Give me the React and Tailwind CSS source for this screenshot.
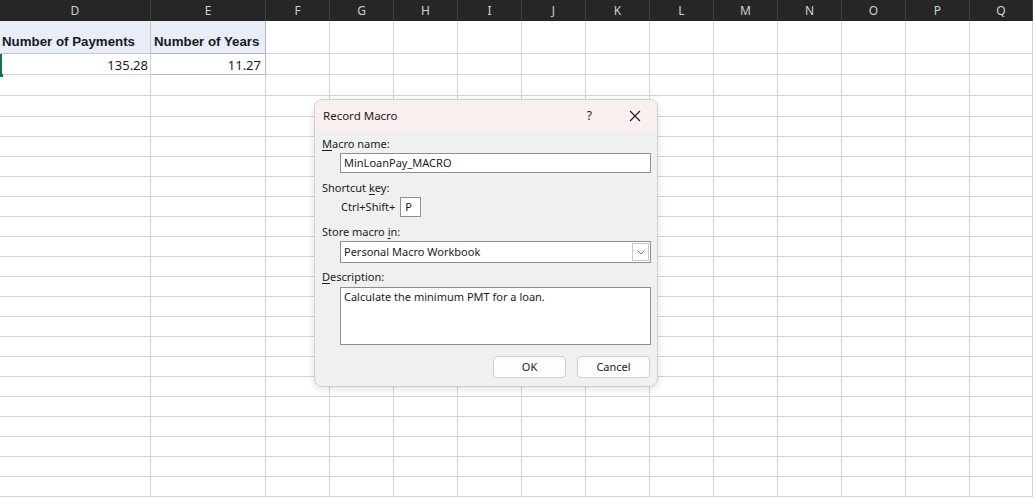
import React from 'react'

const cols = [
  { key: 'D', w: 151 },
  { key: 'E', w: 115 },
  { key: 'F', w: 64 },
  { key: 'G', w: 64 },
  { key: 'H', w: 64 },
  { key: 'I', w: 64 },
  { key: 'J', w: 64 },
  { key: 'K', w: 64 },
  { key: 'L', w: 64 },
  { key: 'M', w: 64 },
  { key: 'N', w: 64 },
  { key: 'O', w: 64 },
  { key: 'P', w: 64 },
  { key: 'Q', w: 63 },
]

// heights of the plain rows below the data (including bottom gridline)
const rowHeights = [21, 21, 20, 20, 20, 20, 20, 20, 20, 20, 20, 20, 20, 20, 20, 20, 20, 20, 20, 20, 20]

const ui = { fontFamily: '"Noto Sans", "Open Sans", sans-serif' }
const cellFont = { fontFamily: '"Liberation Sans", Arial, sans-serif' }

const Label = ({ u, rest, pre = '' }) => (
  <div className="text-[11px] leading-[16px] text-[#1b1b1b] pl-[7px]">
    {pre}
    <span className="underline underline-offset-2">{u}</span>
    {rest}
  </div>
)

const RecordMacroDialog = () => {
  return (
    <div
      className="absolute left-[314px] top-[99px] w-[344px] h-[288px] rounded-[8px] border border-[#cfcfcf] bg-[#f0f0f0] shadow-[0_2px_8px_rgba(0,0,0,0.12)] overflow-hidden flex flex-col"
      style={ui}
    >
      {/* title bar */}
      <div className="h-[31px] shrink-0 bg-[#faefef] flex items-center justify-between pl-[8px] pr-[16px]">
        <span className="text-[11.5px] text-[#1b1b1b]">Record Macro</span>
        <div className="flex items-center gap-[37px]">
          <span className="text-[12px] text-[#1b1b1b]">?</span>
          <svg width="12" height="12" viewBox="0 0 12 12" className="text-[#1b1b1b]">
            <path d="M1 1 L11 11 M11 1 L1 11" stroke="currentColor" strokeWidth="1.1" fill="none" />
          </svg>
        </div>
      </div>

      {/* body */}
      <div className="flex flex-col pt-[5px]">
        <Label u="M" rest="acro name:" />
        <div className="ml-[25px] mt-[1px] w-[311px] h-[20px] bg-white border border-[#8f8f8f] flex items-center pl-[3px] text-[11px] text-[#1b1b1b]">
          MinLoanPay_MACRO
        </div>

        <div className="mt-[7px]">
          <Label pre="Shortcut " u="k" rest="ey:" />
        </div>
        <div className="ml-[26px] mt-[1px] flex items-center">
          <span className="text-[11px] text-[#1b1b1b]">Ctrl+Shift+</span>
          <div className="ml-[5px] w-[21px] h-[20px] bg-white border border-[#8f8f8f] flex items-center pl-[4px] text-[11px] text-[#1b1b1b]">
            P
          </div>
        </div>

        <div className="mt-[7px]">
          <Label pre="Store macro " u="i" rest="n:" />
        </div>
        <div className="ml-[25px] mt-[1px] w-[311px] h-[22px] bg-white border border-[#8f8f8f] flex items-center text-[11px] text-[#1b1b1b]">
          <span className="pl-[3px] flex-1">Personal Macro Workbook</span>
          <div className="w-[17px] h-[18px] mr-[1px] border border-[#c8c8c8] bg-white flex items-center justify-center">
            <svg width="8" height="5" viewBox="0 0 8 5">
              <path d="M0.5 0.5 L4 4 L7.5 0.5" stroke="#707070" strokeWidth="1" fill="none" />
            </svg>
          </div>
        </div>

        <div className="mt-[6px]">
          <Label u="D" rest="escription:" />
        </div>
        <div className="ml-[25px] mt-[2px] w-[311px] h-[58px] bg-white border border-[#8f8f8f] pl-[3px] pt-[1px] text-[11px] leading-[16px] text-[#1b1b1b]">
          Calculate the minimum PMT for a loan.
        </div>

        <div className="mt-[11px] flex justify-end gap-[11px] pr-[7px]">
          <button className="w-[73px] h-[22px] rounded-[4px] border border-[#cfcfcf] bg-[#fdfdfd] text-[11px] text-[#1b1b1b]">
            OK
          </button>
          <button className="w-[73px] h-[22px] rounded-[4px] border border-[#cfcfcf] bg-[#fdfdfd] text-[11px] text-[#1b1b1b]">
            Cancel
          </button>
        </div>
      </div>
    </div>
  )
}

const App = () => {
  return (
    <div className="relative w-[1033px] h-[497px] overflow-hidden bg-white">
      {/* column headers */}
      <div className="flex h-[21px] bg-[#262626]" style={ui}>
        {cols.map((c) => (
          <div
            key={c.key}
            style={{ width: c.w }}
            className="shrink-0 h-full border-r border-[#3d3d3d] flex items-center justify-center text-[12px] text-[#d0d0d0]"
          >
            {c.key}
          </div>
        ))}
      </div>

      {/* row 1: headings */}
      <div className="flex h-[33px]" style={cellFont}>
        {cols.map((c, i) => (
          <div
            key={c.key}
            style={{ width: c.w }}
            className={
              i === 0
                ? 'shrink-0 h-full border-r border-b border-[#c8c8c8] bg-[#e7eef8] flex items-end pb-[1px] pl-[2px] text-[13.3px] font-bold text-[#1a1a1a]'
                : i === 1
                ? 'shrink-0 h-full border-r border-b border-[#b8b8b8] bg-[#e7eef8] flex items-end pb-[1px] pl-[3px] text-[13.3px] font-bold text-[#1a1a1a]'
                : 'shrink-0 h-full border-r border-b border-[#d4d4d4]'
            }
          >
            {i === 0 ? 'Number of Payments' : i === 1 ? 'Number of Years' : ''}
          </div>
        ))}
      </div>

      {/* row 2: values */}
      <div className="relative flex h-[21px]" style={ui}>
        {cols.map((c, i) => (
          <div
            key={c.key}
            style={{ width: c.w }}
            className={
              i === 0
                ? 'shrink-0 h-full border-r border-b border-[#d4d4d4] flex items-end justify-end pr-[2px] text-[13px] leading-[18px] text-[#1a1a1a]'
                : i === 1
                ? 'shrink-0 h-full border-r border-b border-[#b8b8b8] flex items-end justify-end pr-[4px] text-[13px] leading-[18px] text-[#1a1a1a]'
                : 'shrink-0 h-full border-r border-b border-[#d4d4d4]'
            }
          >
            {i === 0 ? '135.28' : i === 1 ? '11.27' : ''}
          </div>
        ))}
        {/* selected cell edge from column C */}
        <div className="absolute left-0 top-0 w-[2px] h-[22px] bg-[#1f6e43]" />
        <div className="absolute left-0 top-[20px] w-[3px] h-[3px] bg-[#1f6e43]" />
      </div>

      {/* empty rows */}
      {rowHeights.map((h, r) => (
        <div key={r} className="flex" style={{ height: h }}>
          {cols.map((c) => (
            <div
              key={c.key}
              style={{ width: c.w }}
              className="shrink-0 h-full border-r border-b border-[#d4d4d4]"
            />
          ))}
        </div>
      ))}

      <RecordMacroDialog />
    </div>
  )
}

export default App
